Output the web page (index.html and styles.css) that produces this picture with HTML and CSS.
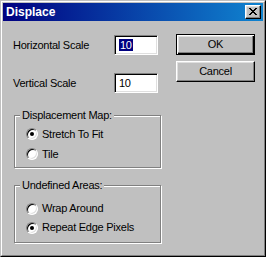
FILE: index.html
```html
<!DOCTYPE html>
<html>
<head>
<meta charset="utf-8">
<link rel="stylesheet" href="styles.css">
</head>
<body>
<div class="window">
  <div class="frame">
    <div class="titlebar">
      <span class="title">Displace</span>
      <span class="close">
        <svg width="8" height="7" viewBox="0 0 8 7" shape-rendering="crispEdges">
          <path fill="#000" d="M0 0h2v1h-2zM6 0h2v1h-2zM1 1h2v1h-2zM5 1h2v1h-2zM2 2h4v1h-4zM3 3h2v1h-2zM2 4h4v1h-4zM1 5h2v1h-2zM5 5h2v1h-2zM0 6h2v1h-2zM6 6h2v1h-2z"/>
        </svg>
      </span>
    </div>
    <div class="client">
      <div class="left">
        <div class="field">
          <span class="label">Horizontal Scale</span>
          <span class="edit"><span class="sel">10</span></span>
        </div>
        <div class="field field2">
          <span class="label">Vertical Scale</span>
          <span class="edit">10</span>
        </div>
        <div class="group group1">
          <div class="group-title">Displacement Map:</div>
          <div class="radio-row"><span class="radio checked"></span><span>Stretch To Fit</span></div>
          <div class="radio-row"><span class="radio"></span><span>Tile</span></div>
        </div>
        <div class="group group2">
          <div class="group-title">Undefined Areas:</div>
          <div class="radio-row"><span class="radio"></span><span>Wrap Around</span></div>
          <div class="radio-row"><span class="radio checked"></span><span>Repeat Edge Pixels</span></div>
        </div>
      </div>
      <div class="right">
        <div class="button default"><span>OK</span></div>
        <div class="button"><span>Cancel</span></div>
      </div>
    </div>
  </div>
</div>
</body>
</html>
```
FILE: styles.css
```css
html, body {
  margin: 0;
  padding: 0;
  background: #c0c0c0;
}
body {
  font-family: "Liberation Sans", Arial, sans-serif;
  font-size: 11px;
  letter-spacing: -0.25px;
  color: #000;
}
.window {
  width: 266px;
  height: 257px;
  box-sizing: border-box;
  border: 1px solid;
  border-color: #c0c0c0 #000 #000 #c0c0c0;
  background: #c0c0c0;
}
.frame {
  height: 100%;
  box-sizing: border-box;
  border: 1px solid;
  border-color: #fff #808080 #808080 #fff;
  padding: 1px;
}
.titlebar {
  height: 18px;
  background: linear-gradient(to right, #000080, #1084d0);
  display: flex;
  align-items: center;
  justify-content: space-between;
  padding: 0 2px 0 3px;
}
.title {
  color: #fff;
  font-weight: bold;
  font-size: 12px;
  letter-spacing: 0;
  line-height: 18px;
}
.close {
  width: 16px;
  height: 14px;
  box-sizing: border-box;
  background: #c0c0c0;
  border: 1px solid;
  border-color: #fff #000 #000 #fff;
  box-shadow: inset -1px -1px 0 #808080, inset 1px 1px 0 #dfdfdf;
  display: flex;
  align-items: flex-start;
  justify-content: flex-start;
  padding: 2px 0 0 3px;
}
.close svg { display: block; }
.client {
  display: grid;
  grid-template-columns: 163px 79px;
  padding: 13px 0 0 10px;
}
.field {
  display: grid;
  grid-template-columns: 101px 44px;
  align-items: center;
  height: 20px;
  margin-top: 1px;
}
.field2 { margin-top: 18px; }
.label { line-height: 13px; }
.edit {
  height: 20px;
  box-sizing: border-box;
  background: #fff;
  border: 1px solid;
  border-color: #808080 #fff #fff #808080;
  box-shadow: inset 1px 1px 0 #000, inset -1px -1px 0 #dfdfdf;
  padding: 3px 0 0 4px;
  line-height: 13px;
}
.sel {
  background: #000080;
  color: #fff;
  padding: 0 1px;
}
.group {
  margin-left: 1px;
  width: 147px;
  box-sizing: border-box;
  border: 1px solid #808080;
  box-shadow: 1px 1px 0 #fff, inset 1px 1px 0 #fff;
  padding: 0 0 0 11px;
}
.group1 { margin-top: 22px; height: 53px; }
.group2 { margin-top: 17px; height: 58px; }
.group-title {
  width: fit-content;
  background: #c0c0c0;
  margin: -7px 0 0 -6px;
  padding: 0 2px;
  line-height: 13px;
}
.group1 .group-title { margin-bottom: 2px; }
.group2 .group-title { margin-bottom: 7px; }
.radio-row {
  display: flex;
  align-items: center;
  height: 20px;
  gap: 4px;
  line-height: 13px;
}
.group2 .radio-row { height: 19px; }
.radio {
  width: 12px;
  height: 12px;
  box-sizing: border-box;
  border-radius: 50%;
  border: 1px solid;
  border-color: #808080 #fff #fff #808080;
  background: #fff;
  box-shadow: inset 1px 1px 0 #000, inset -1px -1px 0 #dfdfdf;
  display: flex;
  align-items: center;
  justify-content: center;
}
.radio.checked::after {
  content: "";
  width: 4px;
  height: 4px;
  border-radius: 50%;
  background: #000;
}
.right {
  display: flex;
  flex-direction: column;
  gap: 6px;
  padding-top: 0;
}
.button {
  height: 21px;
  box-sizing: border-box;
  background: #c0c0c0;
  border: 1px solid;
  border-color: #fff #000 #000 #fff;
  box-shadow: inset -1px -1px 0 #808080, inset 1px 1px 0 #dfdfdf;
  display: flex;
  align-items: center;
  justify-content: center;
  line-height: 13px;
}
.button.default {
  border: 1px solid #000;
  box-shadow: inset 1px 1px 0 #fff, inset -1px -1px 0 #000, inset -2px -2px 0 #808080, inset 2px 2px 0 #dfdfdf;
}
```
